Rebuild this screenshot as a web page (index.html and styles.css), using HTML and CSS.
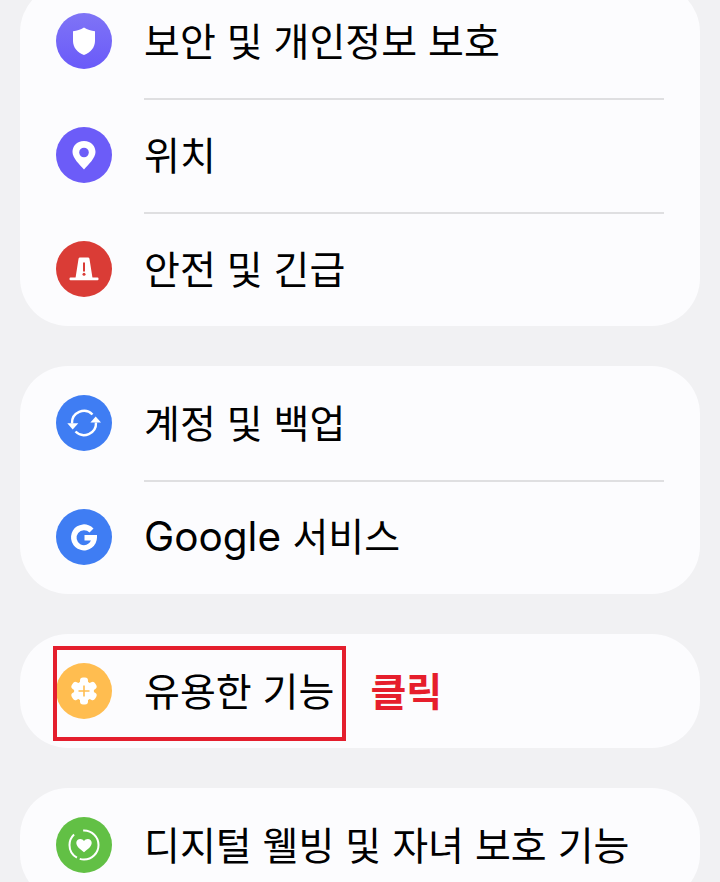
FILE: index.html
```html
<!DOCTYPE html>
<html lang="ko">
<head>
<meta charset="utf-8">
<title>설정</title>
<link rel="stylesheet" href="styles.css">
</head>
<body>
<main class="list">
  <section class="card">
    <div class="row">
      <svg class="icon" viewBox="0 0 56 56"><defs><linearGradient id="pg" x1="0" y1="0" x2="0" y2="1"><stop offset="0" stop-color="#7f74f6"/><stop offset="1" stop-color="#6a5af9"/></linearGradient></defs><circle cx="28" cy="28" r="28" fill="url(#pg)"/><path d="M28 14.500C31.500 16.800 35 17.800 39 18.200V28C39 34.500 34.500 39.500 28 42C21.500 39.500 17 34.500 17 28V18.200C21 17.800 24.500 16.800 28 14.500Z" fill="#fff"/></svg>
      <span class="label">보안 및 개인정보 보호</span>
    </div>
    <div class="row">
      <svg class="icon" viewBox="0 0 56 56"><circle cx="28" cy="28" r="28" fill="#6c5cf8"/><path d="M28 14C20.500 14 16.500 19.500 16.500 25C16.500 31 23.500 37.500 28 42.500C32.500 37.500 39.500 31 39.500 25C39.500 19.500 35.500 14 28 14Z" fill="#fff"/><circle cx="28" cy="25.500" r="4.800" fill="#6c5cf8"/></svg>
      <span class="label">위치</span>
    </div>
    <div class="row">
      <svg class="icon" viewBox="0 0 56 56"><circle cx="28" cy="28" r="28" fill="#da3c36"/><path d="M22.500 18C22.600 17 23.300 16.500 24 16.500H32C32.700 16.500 33.400 17 33.500 18L36.500 37H19.500Z" fill="#fff"/><rect x="13.500" y="36.500" width="29" height="2.800" rx="1" fill="#fff"/><rect x="27" y="21.500" width="2" height="9" fill="#da3c36"/><circle cx="28" cy="33.300" r="1.500" fill="#da3c36"/></svg>
      <span class="label">안전 및 긴급</span>
    </div>
  </section>
  <section class="card">
    <div class="row">
      <svg class="icon" viewBox="0 0 56 56"><circle cx="28" cy="28" r="28" fill="#3f7df3"/><path d="M16 28.500A12 12 0 0 1 36.500 19.500" fill="none" stroke="#fff" stroke-width="2.400"/><path d="M40 27.500A12 12 0 0 1 19.500 36.500" fill="none" stroke="#fff" stroke-width="2.400"/><path d="M11.300 28.300H22.300L16.700 34.500Z" fill="#fff"/><path d="M34.400 27.500H45L39.700 21.500Z" fill="#fff"/></svg>
      <span class="label">계정 및 백업</span>
    </div>
    <div class="row">
      <svg class="icon" viewBox="0 0 56 56"><circle cx="28" cy="28" r="28" fill="#3f7df3"/><path d="M37.500 19.500A13 13 0 1 0 41 28.500V26H28.500V31.500H35A7.500 7.500 0 1 1 33.500 23.500Z" fill="#fff"/></svg>
      <span class="label"><span class="latin">Google </span>서비스</span>
    </div>
  </section>
  <section class="card">
    <div class="row">
      <svg class="icon" viewBox="0 0 56 56"><circle cx="28" cy="28" r="28" fill="#ffbd50"/><g fill="#fff"><circle cx="28" cy="28" r="10"/><rect x="24" y="14.500" width="8" height="27" rx="3"/><rect x="24" y="14.500" width="8" height="27" rx="3" transform="rotate(60 28 28)"/><rect x="24" y="14.500" width="8" height="27" rx="3" transform="rotate(120 28 28)"/></g><path d="M28 22.500V33.500M22.500 28H33.500" stroke="#ffbd50" stroke-width="1.600"/></svg>
      <span class="label">유용한 기능</span>
      <span class="note">클릭</span>
      <div class="highlight"></div>
    </div>
  </section>
  <section class="card">
    <div class="row">
      <svg class="icon" viewBox="0 0 56 56"><circle cx="28" cy="28" r="28" fill="#62c045"/><circle cx="28" cy="28" r="14.500" fill="none" stroke="#fff" stroke-width="2" stroke-dasharray="27 3 27 10 24 0"/><path d="M28 35.200C23.800 32 20.300 29.500 20.300 25.800C20.300 23.400 22.200 21.900 24.200 21.900C25.800 21.900 27.200 22.700 28 24.100C28.800 22.700 30.200 21.900 31.800 21.900C33.800 21.900 35.700 23.400 35.700 25.800C35.700 29.500 32.200 32 28 35.200Z" fill="#fff"/></svg>
      <span class="label">디지털 웰빙 및 자녀 보호 기능</span>
    </div>
  </section>
</main>
</body>
</html>
```
FILE: styles.css
```css
html, body {
  margin: 0;
  height: 882px;
  overflow: hidden;
  background: #f1f1f3;
}
.list {
  display: flex;
  flex-direction: column;
  gap: 40px;
  margin-top: -16px;
  padding: 0 20px;
}
.card {
  background: #fcfcfe;
  border-radius: 48px;
}
.row {
  position: relative;
  display: flex;
  align-items: center;
  height: 114px;
  padding-left: 36px;
  font-family: Inter, "Noto Sans CJK KR", sans-serif;
}
.row + .row::before {
  content: "";
  position: absolute;
  top: 0;
  left: 124px;
  right: 36px;
  height: 2px;
  background: #dfdfe1;
}
.icon {
  width: 56px;
  height: 56px;
  flex: none;
}
.label {
  margin-left: 32px;
  font-size: 39px;
  line-height: 1;
  color: #000;
  white-space: nowrap;
}
.latin {
  font-size: 40.5px;
}
.note {
  margin-left: 36px;
  font-size: 39px;
  font-weight: 700;
  line-height: 1;
  color: #e61e2c;
}
.highlight {
  position: absolute;
  left: 33px;
  top: 12px;
  width: 285px;
  height: 87px;
  border: 4px solid #e41e2d;
}
```
